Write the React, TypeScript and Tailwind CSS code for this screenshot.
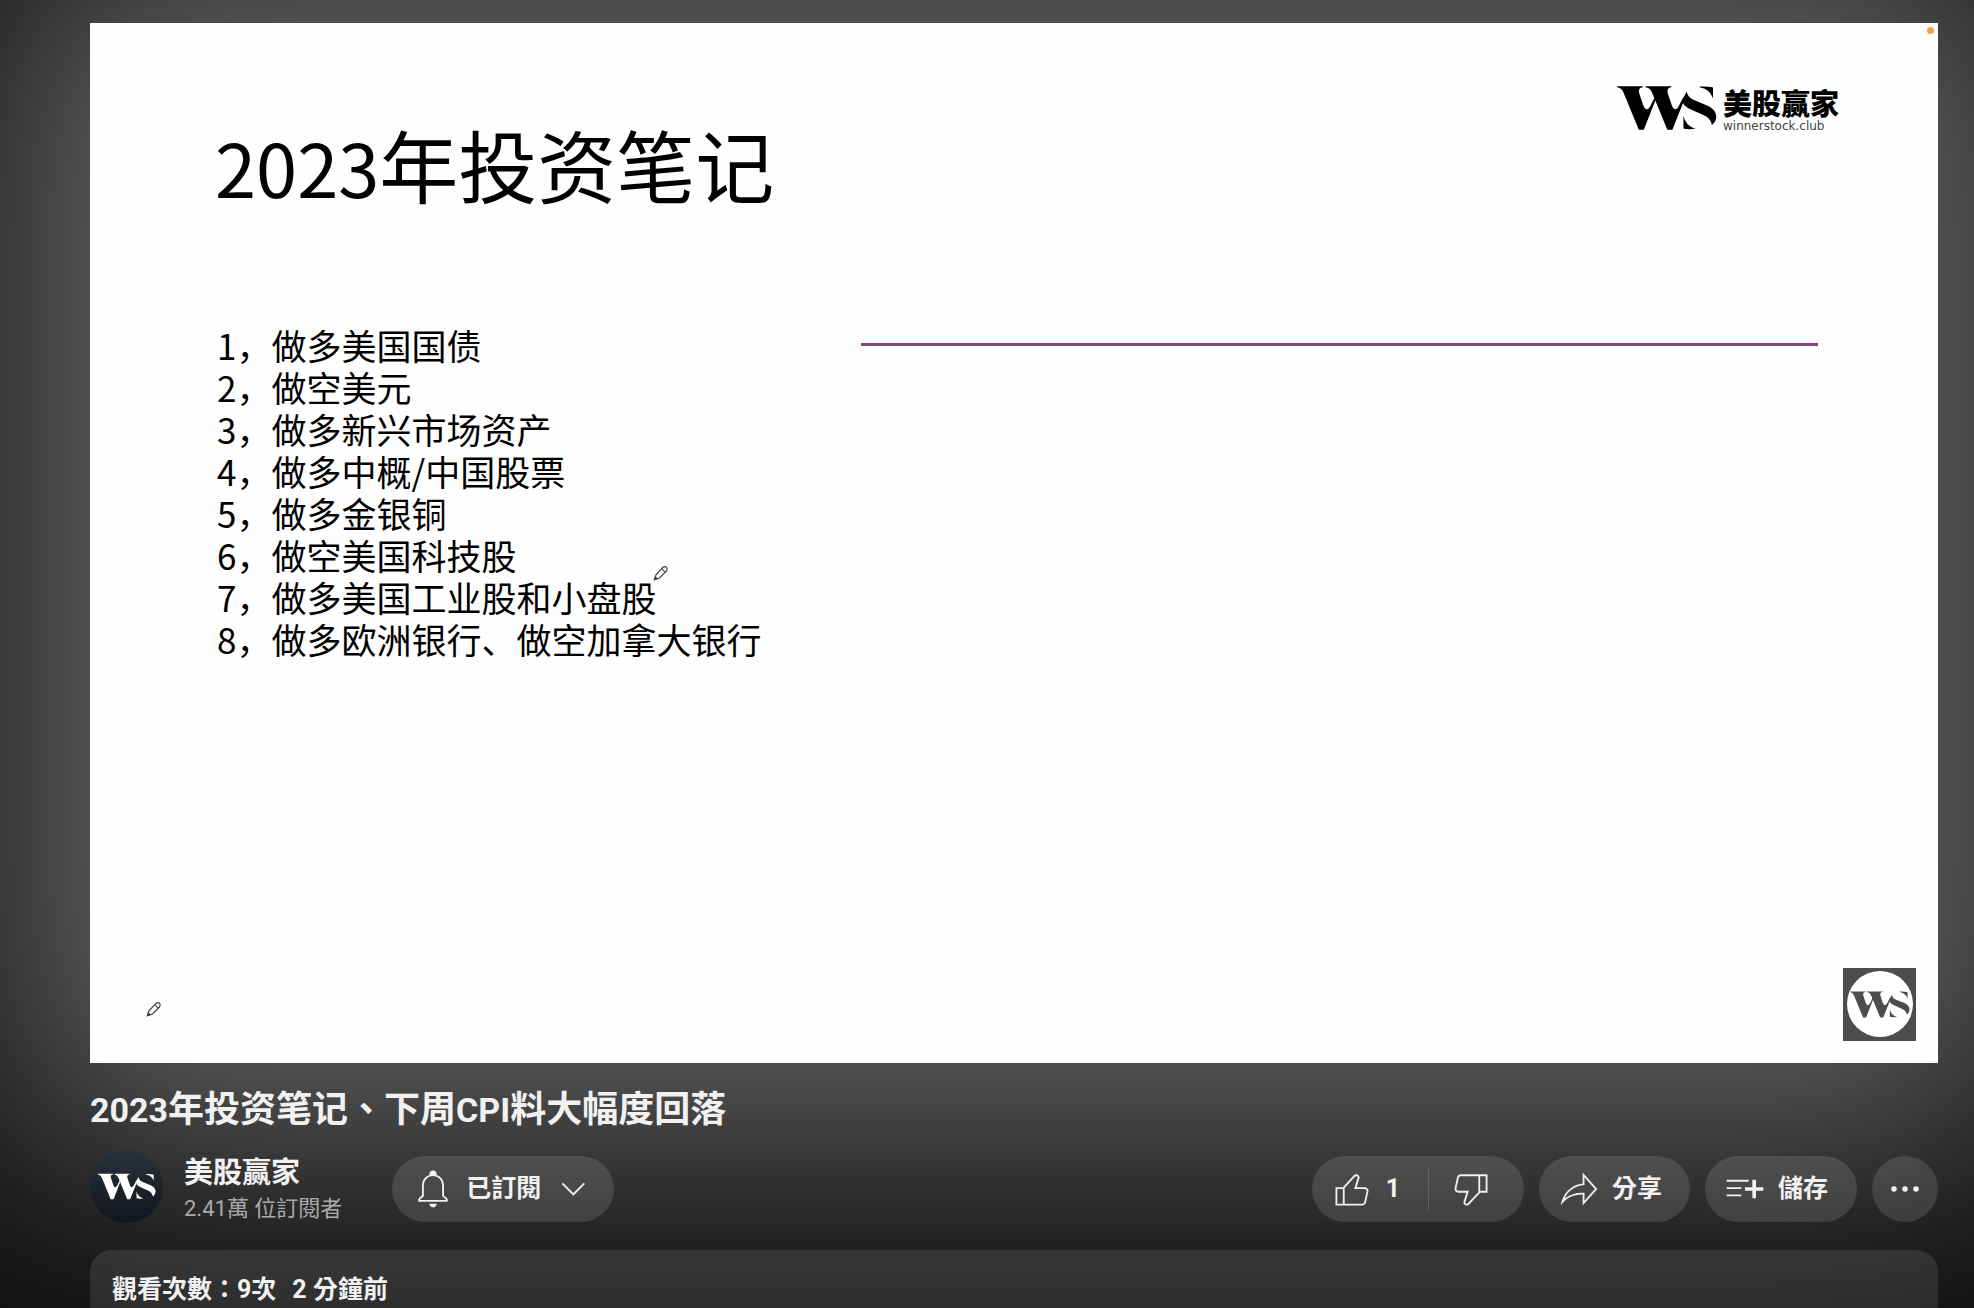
import React from "react";

const notes = [
  "做多美国国债",
  "做空美元",
  "做多新兴市场资产",
  "做多中概/中国股票",
  "做多金银铜",
  "做空美国科技股",
  "做多美国工业股和小盘股",
  "做多欧洲银行、做空加拿大银行",
];

function WsMark({ className }: { className: string }) {
  return (
    <svg viewBox="0 0 298 130" className={className} fill="currentColor" aria-hidden="true">
      <path d="M0 0H77V3Q62 5 66 20L78 56Q83 70 90 69Q96 68 102 54L113 32L116 38L80 130H65L20 20Q13 4 0 3Z" />
      <path d="M85 0H162V3Q147 5 151 20L163 56Q168 70 175 69Q181 68 187 54L198 32L201 40L165 130H150L105 20Q98 4 85 3Z" />
      <path d="M208 16Q190 44 200 56Q208 64 222 70L262 88Q280 98 283 116Q299 102 295 84Q291 68 270 58L226 40Q210 32 208 16Z" />
      <path d="M246 1Q274 0 286 4V36Q276 8 246 3Z" />
      <path d="M198 88Q204 118 234 127Q210 130 198 126Z" />
    </svg>
  );
}

function Icon({ d }: { d: string }) {
  return (
    <svg viewBox="0 0 24 24" className="size-11 shrink-0" fill="currentColor" aria-hidden="true">
      <path d={d} />
    </svg>
  );
}

function Pencil({ className }: { className: string }) {
  return (
    <svg viewBox="0 0 16 16" className={className} fill="none" stroke="#444" strokeWidth="1.2" aria-hidden="true">
      <path d="M1.5 14.5L3 9.8L10 2.3Q12 .8 13.6 2.3Q15 4 13.5 6L6.5 13L1.5 14.5ZM9 3.4Q10 6 12.6 7" />
      <path d="M1.5 14.5L2.3 12L4 13.7Z" fill="#444" />
    </svg>
  );
}

const pill = "flex h-[66px] items-center rounded-full bg-white/12 text-[25px] font-bold";

export default function App() {
  return (
    <div className="flex min-h-screen flex-col overflow-hidden bg-[#0f0f0f] pt-[23px] pr-9 pl-[90px] font-['Roboto','Noto_Sans_CJK_TC',sans-serif] text-[#f1f1f1]">
      <section
        lang="zh-CN"
        className="relative aspect-video w-full bg-[#fefefe] font-['Noto_Sans_CJK_SC',sans-serif] text-black shadow-[0_0_240px_90px_#636363]"
      >
        <div className="flex items-start justify-between pt-[63px] pr-[99px] pl-[125px]">
          <h2 className="pt-[18px] text-[79px] leading-[120px]">
            <span className="text-[74px]">2023</span>年投资笔记
          </h2>
          <div className="flex items-start gap-[6px]">
            <WsMark className="h-[44px] w-[100px]" />
            <div className="flex flex-col">
              <span className="text-[29px] leading-8 font-black">美股赢家</span>
              <span className="font-['DejaVu_Sans',sans-serif] text-[12px] leading-4 text-[#444]">winnerstock.club</span>
            </div>
          </div>
        </div>
        <div className="grid grid-cols-[644px_1fr] pt-[98px] pr-[120px] pl-[127px]">
          <ol className="text-[35px] leading-[42px] whitespace-nowrap">
            {notes.map((note, i) => (
              <li key={note}>{`${i + 1}，${note}`}</li>
            ))}
          </ol>
          <hr className="mt-[19px] h-[3px] border-0 bg-[#834583]" />
        </div>
        <span className="absolute top-1 right-1 size-[7px] rounded-full bg-[#f0a050]" />
        <Pencil className="absolute top-[542px] left-[563px] size-4" />
        <Pencil className="absolute bottom-[46px] left-14 size-4" />
        <div className="absolute right-[22px] bottom-[22px] flex size-[73px] items-center justify-center bg-[#4d4d4d]">
          <div className="flex size-[66px] items-center justify-center rounded-full bg-white text-[#4d4d4d]">
            <WsMark className="h-[27px] w-[60px]" />
          </div>
        </div>
      </section>

      <h1 className="relative mt-[21px] text-[36px] leading-[52px] font-bold">
        <span className="text-[34px]">2023</span>年投资笔记、下周<span className="text-[34px]">CPI</span>料大幅度回落
      </h1>

      <div className="relative mt-[13px] flex items-center justify-between">
        <div className="flex items-center">
          <div className="flex size-[73px] items-center justify-center rounded-full bg-linear-to-b from-[#29323b] to-[#12161c] text-white">
            <WsMark className="h-[27px] w-[58px]" />
          </div>
          <div className="ml-[21px] pt-1">
            <a href="#channel" className="block text-[29px] leading-10 font-bold">美股赢家</a>
            <p className="text-[22px] leading-8 text-[#aaa]">2.41萬 位訂閱者</p>
          </div>
          <button className={`${pill} mt-1 ml-[50px] pr-[18px] pl-[19px]`}>
            <Icon d="M10,20h4c0,1.1-0.9,2-2,2S10,21.1,10,20z M20,17.35V19H4v-1.65l2-1.88v-5.15c0-2.92,1.56-5.22,4-5.98V3.96c0-1.42,1.49-2.5,2.99-1.76C13.64,2.52,14,3.23,14,3.96l0,0.39c2.44,0.75,4,3.06,4,5.98v5.15L20,17.35z M19,17.77l-2-1.88v-5.47c0-2.47-1.19-4.36-3.13-5.1c-1.26-0.53-2.64-0.5-3.84,0.03C8.15,6.11,7,7.99,7,10.42v5.47l-2,1.88V18h14V17.77z" />
            <span className="mx-[11px]">已訂閱</span>
            <Icon d="m18 9.28-6.35 6.35-6.37-6.35.72-.71 5.64 5.65 5.65-5.65z" />
          </button>
        </div>

        <div className="mt-1 flex gap-[15px]">
          <div className={pill}>
            <button className="flex h-full items-center gap-3 pr-7 pl-[18px]">
              <Icon d="M18.77,11h-4.23l1.52-4.94C16.38,5.03,15.54,4,14.38,4c-0.58,0-1.14,0.24-1.52,0.65L7,11H3v10h4h1h9.43c1.06,0,1.98-0.67,2.19-1.61l1.34-6C21.23,12.15,20.18,11,18.77,11z M7,20H4v-8h3V20z M19.98,13.17l-1.34,6C18.54,19.65,18.03,20,17.43,20H8v-8.61l5.6-6.06C13.79,5.12,14.08,5,14.38,5c0.26,0,0.5,0.11,0.63,0.3c0.07,0.1,0.15,0.26,0.09,0.47l-1.52,4.94L13.18,12h1.35h4.23c0.41,0,0.8,0.17,1.03,0.46C19.92,12.61,20.05,12.86,19.98,13.17z" />
              1
            </button>
            <span className="h-11 w-px bg-white/15" />
            <button aria-label="不喜歡" className="flex h-full items-center pr-[31px] pl-5">
              <Icon d="M17,4h-1H6.57C5.5,4,4.59,4.67,4.38,5.61l-1.34,6C2.77,12.85,3.82,14,5.23,14h4.23l-1.52,4.94C7.62,19.97,8.46,21,9.62,21c0.58,0,1.14-0.24,1.52-0.65L17,14h4V4H17z M10.4,19.67C10.21,19.88,9.92,20,9.62,20c-0.26,0-0.5-0.11-0.63-0.3c-0.07-0.1-0.15-0.26-0.09-0.47l1.52-4.94l0.4-1.29H9.46H5.23c-0.41,0-0.8-0.17-1.03-0.46c-0.12-0.15-0.25-0.4-0.18-0.72l1.34-6C5.46,5.35,5.97,5,6.57,5H16v8.61L10.4,19.67z M20,13h-3V5h3V13z" />
            </button>
          </div>
          <button className={`${pill} gap-[11px] pr-7 pl-[18px]`}>
            <Icon d="M15,5.63L20.66,12L15,18.37V15v-1h-1c-3.96,0-7.14,1-9.75,3.09c1.84-4.07,5.11-6.4,9.89-7.1L15,9.86V9V5.63 M14,3v6C6.22,10.13,3.11,15.33,2,21c2.78-3.97,6.44-6,12-6v6l8-9L14,3L14,3z" />
            分享
          </button>
          <button className={`${pill} gap-[11px] pr-[29px] pl-[18px]`}>
            <Icon d="M22,13h-4v4h-2v-4h-4v-2h4V7h2v4h4V13z M14,7H2v1h12V7z M2,12h8v-1H2V12z M2,16h8v-1H2V16z" />
            儲存
          </button>
          <button aria-label="更多" className={`${pill} w-[66px] justify-center`}>
            <Icon d="M7.5,12a1.5,1.5 0 1 1-3,0a1.5,1.5 0 1 1 3,0z M13.5,12a1.5,1.5 0 1 1-3,0a1.5,1.5 0 1 1 3,0z M19.5,12a1.5,1.5 0 1 1-3,0a1.5,1.5 0 1 1 3,0z" />
          </button>
        </div>
      </div>

      <div className="relative mt-[25px] flex-1 rounded-t-[22px] bg-white/10 px-[22px] pt-[22px]">
        <p className="flex gap-4 text-[25px] leading-9 font-bold">
          <span>觀看次數：9次</span>
          <span>2 分鐘前</span>
        </p>
      </div>
    </div>
  );
}
